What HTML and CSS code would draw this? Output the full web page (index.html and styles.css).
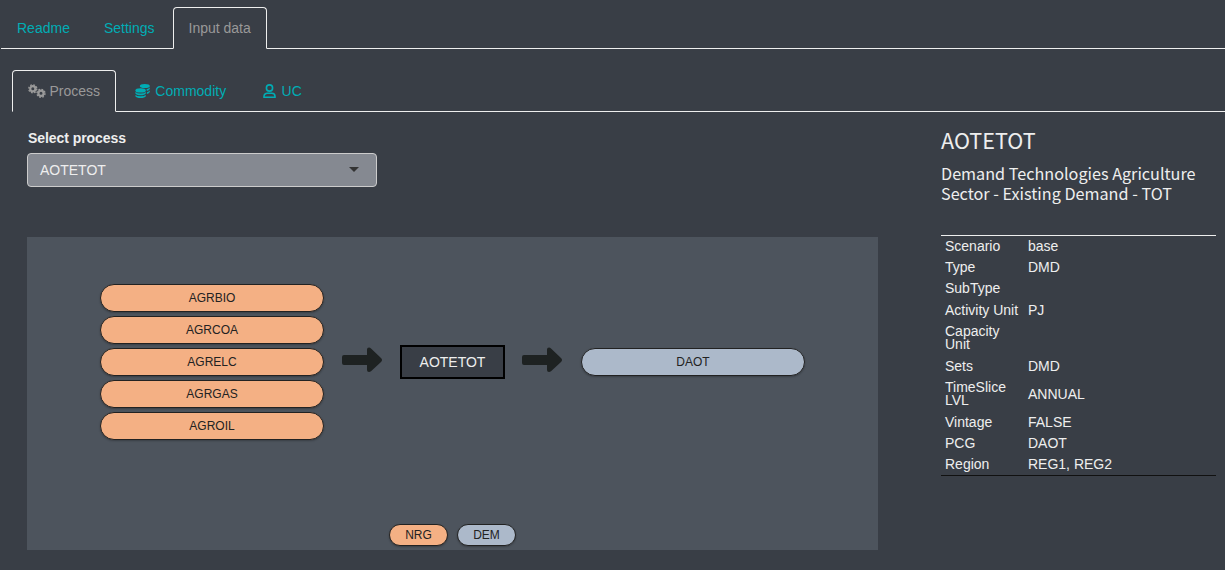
FILE: index.html
```html
<!DOCTYPE html>
<html lang="en">
<head>
<meta charset="utf-8">
<title>Input data</title>
<link rel="stylesheet" href="styles.css">
</head>
<body>
<nav class="tabs tabs-main">
  <a class="tab">Readme</a>
  <a class="tab">Settings</a>
  <a class="tab active">Input data</a>
</nav>
<nav class="tabs tabs-sub">
  <a class="tab active"><svg class="icon cogs" viewBox="0 0 18 14"><g fill="none" stroke="currentColor"><circle cx="4.800" cy="4.800" r="2.600" stroke-width="2.200"/><circle cx="4.800" cy="4.800" r="4" stroke-width="1.400" stroke-dasharray="1.700 1.440"/><circle cx="13" cy="9.300" r="2.600" stroke-width="2.200"/><circle cx="13" cy="9.300" r="4" stroke-width="1.400" stroke-dasharray="1.700 1.440"/></g></svg>Process</a>
  <a class="tab"><svg class="icon coins" viewBox="0 0 15 14"><g fill="currentColor"><ellipse cx="9.800" cy="2" rx="5" ry="2"/><path d="M11.500 5.200Q14 4.700 14.800 3.400V5Q14 6.500 11.900 7zM11.900 8.200Q14 7.700 14.800 6.400V8Q14 9.500 11.900 10z"/><ellipse cx="5.600" cy="6.400" rx="5.200" ry="2.200"/><path d="M.4 8Q2 9.500 5.600 9.500T10.800 8V9.500Q9.800 11.300 5.600 11.300T.4 9.500zM.4 10.900Q2 12.200 5.600 12.200T10.800 10.900V12.200Q9.800 14 5.600 14T.4 12.200z"/></g></svg>Commodity</a>
  <a class="tab"><svg class="icon user" viewBox="0 0 13 14"><g fill="none" stroke="currentColor" stroke-width="1.600"><circle cx="6.500" cy="4" r="3.100"/><path d="M1 13.200V12.400a3.200 3.200 0 0 1 3.200-3.200h4.600a3.200 3.200 0 0 1 3.200 3.200v.8z"/></g></svg>UC</a>
</nav>
<main class="content">
  <section class="process">
    <label class="label">Select process</label>
    <div class="select"><span>AOTETOT</span><i class="caret"></i></div>
    <div class="diagram">
      <div class="flow">
        <div class="stack">
          <div class="pill nrg">AGRBIO</div>
          <div class="pill nrg">AGRCOA</div>
          <div class="pill nrg">AGRELC</div>
          <div class="pill nrg">AGRGAS</div>
          <div class="pill nrg">AGROIL</div>
        </div>
        <svg class="arrow" viewBox="0 0 40 26"><path d="M2 8H25V2.500Q25 .5 27 .5Q28 .5 29 1.500L39 11Q41 13 39 15L29 24.300Q28 25 27 25Q25 25 25 23V18H2Q0 18 0 16V10Q0 8 2 8Z"/></svg>
        <div class="node">AOTETOT</div>
        <svg class="arrow arrow-out" viewBox="0 0 40 26"><path d="M2 8H25V2.500Q25 .5 27 .5Q28 .5 29 1.500L39 11Q41 13 39 15L29 24.300Q28 25 27 25Q25 25 25 23V18H2Q0 18 0 16V10Q0 8 2 8Z"/></svg>
        <div class="stack"><div class="pill dem">DAOT</div></div>
      </div>
      <div class="legend"><span class="pill nrg">NRG</span><span class="pill dem">DEM</span></div>
    </div>
  </section>
  <aside class="details">
    <h3 class="title">AOTETOT</h3>
    <h4 class="subtitle">Demand Technologies Agriculture<br>Sector - Existing Demand - TOT</h4>
    <table class="props">
      <tr><td>Scenario</td><td>base</td></tr>
      <tr><td>Type</td><td>DMD</td></tr>
      <tr><td>SubType</td><td></td></tr>
      <tr><td class="half">Activity Unit</td><td class="half">PJ</td></tr>
      <tr><td>Capacity<br>Unit</td><td></td></tr>
      <tr><td class="half">Sets</td><td class="half">DMD</td></tr>
      <tr><td>TimeSlice<br>LVL</td><td>ANNUAL</td></tr>
      <tr><td class="half">Vintage</td><td class="half">FALSE</td></tr>
      <tr><td>PCG</td><td>DAOT</td></tr>
      <tr><td>Region</td><td>REG1, REG2</td></tr>
    </table>
  </aside>
</main>
</body>
</html>
```
FILE: styles.css
```css
* { box-sizing: border-box; }
body { margin: 0; padding-top: 7px; height: 570px; overflow: hidden; background: #393e46; color: #eee; font: 14px/20px "Liberation Sans", Arial, sans-serif; }
.tabs { display: flex; gap: 2px; height: 42px; border-bottom: 1px solid #eee; }
.tabs-main { margin-left: 1px; }
.tabs-sub { margin: 21px 0 0 12px; }
.tab { display: flex; align-items: center; height: 42px; padding: 0 15px; border: 1px solid transparent; border-radius: 4px 4px 0 0; color: #00adb5; white-space: nowrap; }
.tab.active { color: #999; background: #393e46; border-color: #eee; border-bottom-color: #393e46; }
.icon { flex: none; height: 14px; }
.cogs { width: 18px; margin-right: 3.4px; }
.coins { width: 15px; margin: 0 5.4px 0 1px; }
.user { width: 13px; margin: 0 6px 0 2.4px; }
.content { display: flex; }
.process { width: 851px; margin-left: 27px; padding-top: 16px; }
.label { display: block; padding-left: 1px; font-weight: bold; letter-spacing: -.07px; }
.select { display: flex; align-items: center; justify-content: space-between; width: 350px; height: 34px; margin-top: 5px; padding: 0 17px 0 12px; border: 1px solid #ccc; border-radius: 4px; background: #858991; }
.caret { margin-top: -2px; border: 5px solid transparent; border-top-color: #333; border-bottom: 0; }
.diagram { display: flex; flex-direction: column; justify-content: space-between; height: 313px; margin-top: 50px; padding: 47px 73px 4px; background: #4d545d; }
.flow { display: flex; align-items: center; }
.stack { display: flex; flex-direction: column; gap: 4px; width: 224px; }
.pill { height: 28px; border: 1px solid #222; border-radius: 14px; color: #222; font-size: 12px; line-height: 26px; text-align: center; box-shadow: 0 1px 2px rgba(0,0,0,.25); }
.nrg { background: #f4b084; }
.dem { background: #acb9ca; }
.arrow { width: 40px; height: 26px; margin: 0 18px 4px; fill: #1e2222; }
.arrow-out { margin: 0 19px 4px 17px; }
.node { width: 105px; height: 34px; border: 2px solid #000; background: #393e46; line-height: 30px; text-align: center; }
.legend { display: flex; justify-content: center; gap: 9px; }
.legend .pill { width: 59px; height: 22px; line-height: 20px; }
.details { width: 275px; margin-left: 63px; padding-top: 15px; }
.title, .subtitle { font-family: "Noto Sans CJK SC", sans-serif; font-weight: 400; }
.title { margin: 0; font-size: 21.6px; line-height: 26px; }
.subtitle { margin: 10px 0 0; font-size: 16.2px; line-height: 20px; white-space: nowrap; }
.props { width: 100%; margin-top: 32px; border-collapse: separate; border-spacing: 0; table-layout: fixed; border-top: 1px solid #eee; border-bottom: 1px solid #111; line-height: 13px; }
.props td { padding: 4px; }
.props td.half { padding-top: 5px; }
.props td:first-child { width: 83px; white-space: nowrap; }
```
